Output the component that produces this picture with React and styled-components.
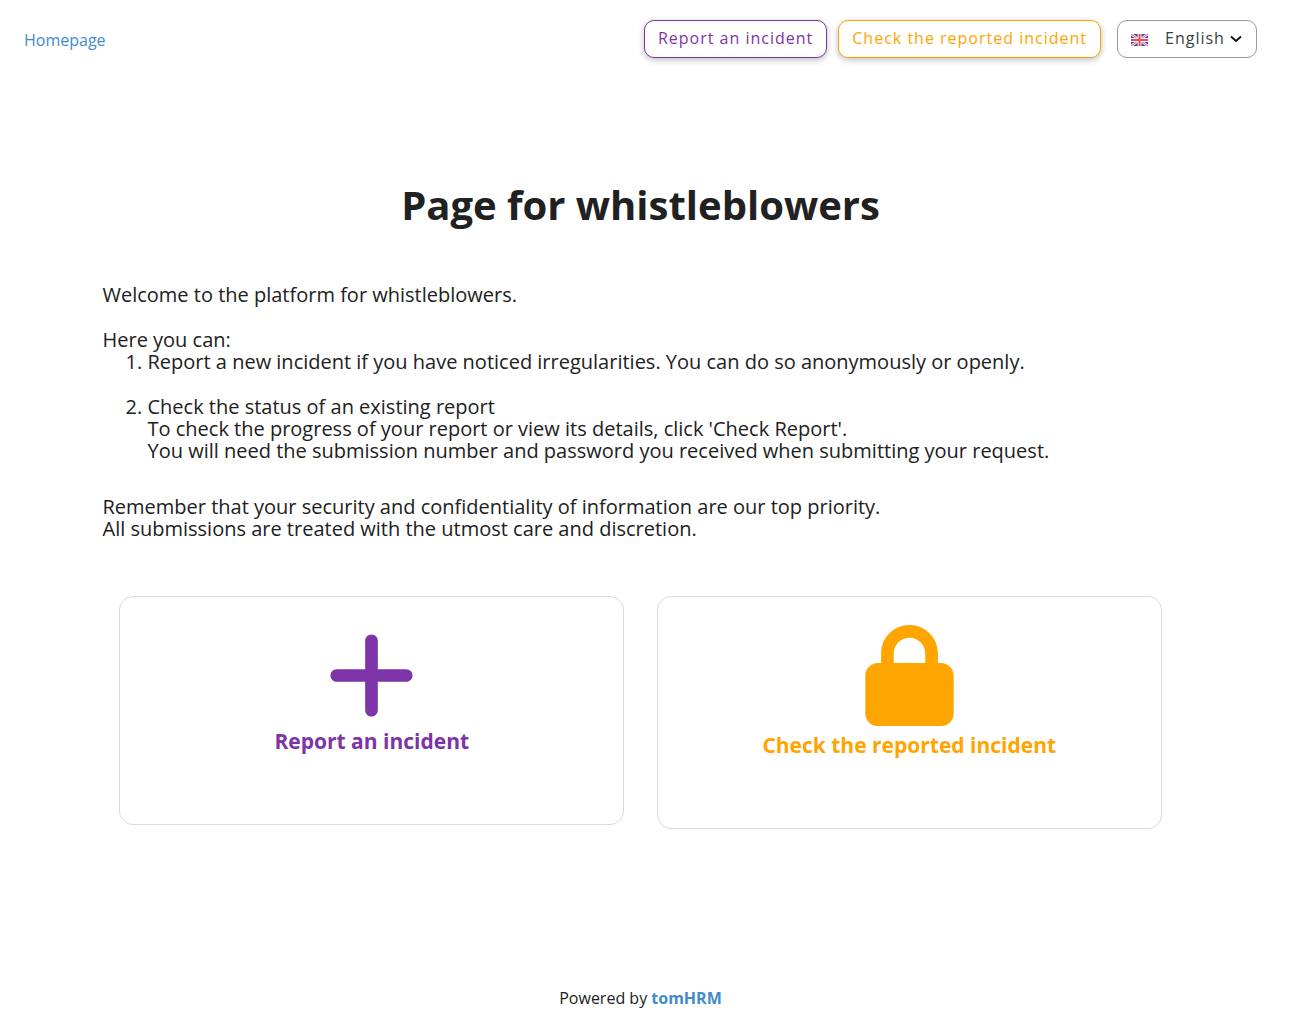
import React, { useState } from 'react';
import styled, { createGlobalStyle } from 'styled-components'
import { FaPlus, FaLock } from 'react-icons/fa6'

const purple = '#7c34a8'
const orange = '#ffa500'
const blue = '#428bca'

const Flag = () => (
    <FlagIcon viewBox="0 0 17 12" aria-hidden="true">
        <rect width="17" height="12" fill="#3a4a9f" />
        <path d="M0 0L17 12M17 0L0 12" stroke="#f3e6ee" strokeWidth="2.6" />
        <path d="M0 0L17 12M17 0L0 12" stroke="#e8707b" strokeWidth="1" />
        <path d="M8.5 0V12M0 6H17" stroke="#f8e4e8" strokeWidth="4" />
        <path d="M8.5 0V12M0 6H17" stroke="#e8505c" strokeWidth="2" />
    </FlagIcon>
)

const Header = () => {
    const [ lang, setLang ] = useState('en');

    return (
        <Top>
            <HomeLink href="#">Homepage</HomeLink>
            <Actions>
                <Button type="button" $color={purple}>Report an incident</Button>
                <Button type="button" $color={orange}>Check the reported incident</Button>
                <Language>
                    <Flag />
                    <Select aria-label="Language" value={lang} onChange={e => setLang(e.target.value)}>
                        <option value="en">English</option>
                    </Select>
                    <Chevron viewBox="0 0 12 8" aria-hidden="true">
                        <path d="M1 1.5L6 6L11 1.5" fill="none" stroke="#111" strokeWidth="1.8" />
                    </Chevron>
                </Language>
            </Actions>
        </Top>
    )
}

const App = () => (
    <Page>
        <GlobalStyle />
        <Header />
        <Main>
            <Title>Page for whistleblowers</Title>
            <Text>Welcome to the platform for whistleblowers.</Text>
            <Text>Here you can:</Text>
            <List>
                <li>Report a new incident if you have noticed irregularities. You can do so anonymously or openly.</li>
                <li>
                    Check the status of an existing report<br />
                    To check the progress of your report or view its details, click 'Check Report'.<br />
                    You will need the submission number and password you received when submitting your request.
                </li>
            </List>
            <Text>
                Remember that your security and confidentiality of information are our top priority.<br />
                All submissions are treated with the utmost care and discretion.
            </Text>
            <Cards>
                <Card href="#" $color={purple}>
                    <FaPlus size={101} />
                    <CardTitle>Report an incident</CardTitle>
                </Card>
                <Card href="#" $color={orange} $gap={4}>
                    <FaLock size={101} />
                    <CardTitle>Check the reported incident</CardTitle>
                </Card>
            </Cards>
        </Main>
        <Footer>Powered by <Brand href="#">tomHRM</Brand></Footer>
    </Page>
)

const GlobalStyle = createGlobalStyle`
    * {
        box-sizing: border-box;
    }
    body {
        margin: 0;
        background: #fff;
        color: #212121;
        font-family: "Open Sans", sans-serif;
        font-size: 16px;
    }
    a {
        text-decoration: none;
    }
`
const Page = styled.div`
    display: flex;
    flex-direction: column;
    min-height: 100vh;
    padding: 20px 9px 19px 0;
`
const Top = styled.header`
    display: flex;
    justify-content: space-between;
    align-items: center;
    padding: 0 24px;
`
const HomeLink = styled.a`
    padding-top: 2px;
    color: ${blue};
`
const Actions = styled.div`
    display: flex;
    gap: 11px;
`
const Button = styled.button`
    height: 38px;
    padding: 0 13px 2px;
    border: 1px solid ${p => p.$color};
    border-radius: 10px;
    background: #fff;
    color: ${p => p.$color};
    font: inherit;
    letter-spacing: 1px;
    box-shadow: 0 2px 6px rgba(0, 0, 0, 0.26);
    cursor: pointer;
`
const Language = styled.label`
    display: flex;
    align-items: center;
    height: 38px;
    margin-left: 5px;
    padding: 0 14px 0 13px;
    border: 1px solid #999;
    border-radius: 10px;
`
const FlagIcon = styled.svg`
    width: 17px;
    height: 12px;
    margin: 2px 17px 0 0;
`
const Select = styled.select`
    appearance: none;
    padding: 0 0 2px;
    border: 0;
    background: none;
    color: #3a3f44;
    font: inherit;
    letter-spacing: 1px;
`
const Chevron = styled.svg`
    width: 12px;
    height: 8px;
    margin-left: 5px;
`
const Main = styled.main`
    width: 84%;
    margin: 0 auto;
    font-size: 20px;
    line-height: 22px;
`
const Title = styled.h1`
    margin: 124px 0 56px;
    font-size: 40px;
    line-height: 46px;
    text-align: center;
`
const Text = styled.p`
    margin: 0;
    & + & {
        margin-top: 23px;
    }
`
const List = styled.ol`
    margin: 0 0 34px;
    padding-left: 45px;
    li + li {
        margin-top: 23px;
    }
`
const Cards = styled.div`
    display: grid;
    grid-template-columns: 1fr 1fr;
    align-items: start;
    gap: 33px;
    margin: 56px 17px 0;
`
const Card = styled.a`
    display: flex;
    flex-direction: column;
    align-items: center;
    gap: ${p => p.$gap || 0}px;
    padding: 28px 16px 68px;
    border: 1px solid #d9d9e3;
    border-radius: 14px;
    color: ${p => p.$color};
`
const CardTitle = styled.strong`
    font-size: 21px;
    line-height: 30px;
`
const Footer = styled.footer`
    margin-top: auto;
    text-align: center;
`
const Brand = styled.a`
    color: ${blue};
    font-weight: bold;
`

export default App
